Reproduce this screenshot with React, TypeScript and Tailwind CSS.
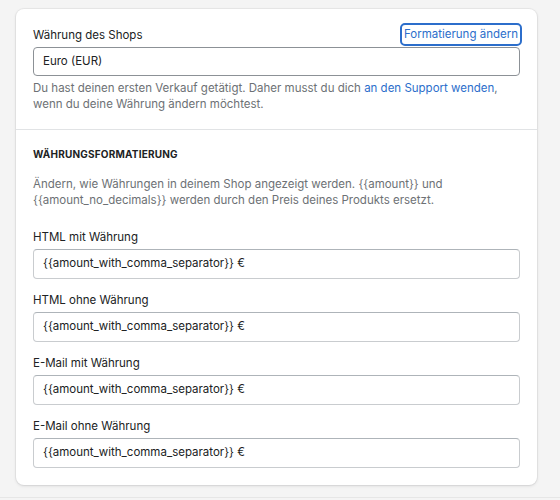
const fields = [
  'HTML mit Währung',
  'HTML ohne Währung',
  'E-Mail mit Währung',
  'E-Mail ohne Währung',
];

function Field({ label }: { label: string }) {
  return (
    <div className="flex flex-col">
      <label className="h-[20px] leading-[20px] text-[#202223]">{label}</label>
      <div className="mt-[2px] flex h-[30px] items-center rounded-[4px] border border-[#c9cccf] border-t-[#aeb4b9] bg-white px-[9px] text-[#202223]">
        {'{{amount_with_comma_separator}} €'}
      </div>
    </div>
  );
}

export default function App() {
  return (
    <div className="min-h-[500px] bg-[#f4f4f4] font-['Inter',sans-serif] text-[11.5px]">
      <div className="h-[497px] pl-[16px] pr-[23px] pt-[9px]">
        <div className="overflow-hidden rounded-[8px] bg-white shadow-[0_0_0_1px_rgba(63,63,68,0.06),0_1px_3px_0_rgba(63,63,68,0.15)]">
          {/* Shop currency */}
          <div className="px-[17px] pb-[17px] pt-[14px]">
            <div className="flex items-center justify-between">
              <span className="leading-[20px] text-[#202223]">Währung des Shops</span>
              <button className="-mr-[2px] h-[23px] rounded-[5px] border-2 border-[#2c6ecb] px-[2px] text-[11.5px] leading-[19px] text-[#2c6ecb]">
                Formatierung ändern
              </button>
            </div>
            <div className="mt-[1px] flex h-[29px] items-center rounded-[4px] border border-[#8c9196] bg-white px-[9px] text-[#202223]">
              Euro (EUR)
            </div>
            <p className="mt-[4px] leading-[16px] text-[#6d7175]">
              Du hast deinen ersten Verkauf getätigt. Daher musst du dich{' '}
              <span className="text-[#2c6ecb]">an den Support wenden</span>,
              <br />
              wenn du deine Währung ändern möchtest.
            </p>
          </div>

          <div className="h-px bg-[#e1e3e5]" />

          {/* Formatting */}
          <div className="px-[17px] pb-[17px] pt-[16px]">
            <h2 className="text-[10px] font-bold leading-[16px] tracking-[0.02em] text-[#202223]">
              WÄHRUNGSFORMATIERUNG
            </h2>
            <p className="mt-[14px] leading-[16px] text-[#6d7175]">
              Ändern, wie Währungen in deinem Shop angezeigt werden. {'{{amount}}'} und
              <br />
              {'{{amount_no_decimals}}'} werden durch den Preis deines Produkts ersetzt.
            </p>
            <div className="mt-[19px] flex flex-col gap-[11px]">
              {fields.map((f) => (
                <Field key={f} label={f} />
              ))}
            </div>
          </div>
        </div>
      </div>
      <div className="h-[3px] border-t border-[#e6e6e6] bg-[#f4f4f4]" />
    </div>
  );
}
